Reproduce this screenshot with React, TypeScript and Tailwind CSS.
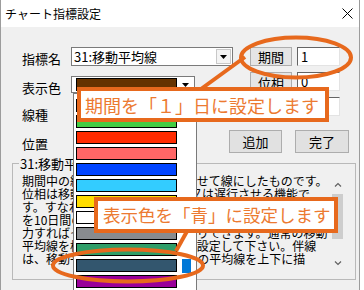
const swatches = [
  "bg-[#663300]",
  "bg-[#44cc44]",
  "bg-[#ff2b00]",
  "bg-[#ff6666]",
  "bg-[#0044ff]",
  "bg-[#33ccff]",
  "bg-[#ffdd00]",
  "bg-white",
  "bg-[#888b8f]",
  "bg-[#2f9e68]",
  "bg-[#33566e]",
  "bg-[#990099]",
];
const selected = 10;

const lines = [
  "期間中の終値平均値を1本に合わせて線にしたものです。",
  "位相は移動平均線を日数分先行又は遅行させる機能で",
  "す。すなわち、期間と位相を組み合わせ、例えば期間",
  "を10日間の移動平均線にして位相に5と入",
  "力すればその線を5日先行させたりできます。通常の移動",
  "平均線を標準で表示する時は0に設定して下さい。伴線",
  "は、移動平均線から一定割合(%)の平均線を上下に描",
];

function DownArrow() {
  return (
    <svg width="7" height="4" viewBox="0 0 7 4">
      <path d="M0 0h7L3.5 4z" fill="#000" />
    </svg>
  );
}

function Chevron({ up }: { up?: boolean }) {
  return (
    <svg width="8" height="5" viewBox="0 0 8 5">
      <path
        d={up ? "M1 4.5L4 1.5L7 4.5" : "M1 0.5L4 3.5L7 0.5"}
        stroke="#606060"
        strokeWidth="1.2"
        fill="none"
      />
    </svg>
  );
}

function LabelButton({ text, h }: { text: string; h: string }) {
  return (
    <div
      className={`flex w-[42px] ${h} items-center justify-center border border-[#adadad] bg-[#e5e5e5] text-[13px] leading-none`}
    >
      {text}
    </div>
  );
}

function NumInput({ value }: { value: string }) {
  return (
    <div className="flex h-[19px] w-[43px] items-center border border-[#e3e3e3] border-t-[#646464] border-l-[#646464] bg-white pl-[3px] text-[13px] leading-none">
      {value}
    </div>
  );
}

export default function App() {
  return (
    <div className="relative h-[290px] w-[364px] overflow-hidden bg-white font-['Noto_Sans_CJK_JP','Noto_Sans',sans-serif] text-black">
      <div className="flex h-full w-[360px] flex-col border-x border-[#9c9c9c]">
        {/* title bar */}
        <div className="flex h-[27px] items-center justify-between bg-white pl-[4px] pr-[6px] text-[12px]">
          <span>チャート指標設定</span>
          <svg width="11" height="11" viewBox="0 0 11 11">
            <path d="M0.5 0.5L10.5 10.5M10.5 0.5L0.5 10.5" stroke="#000" strokeWidth="1" />
          </svg>
        </div>

        <div className="flex-1 bg-[#f0f0f0] pl-[11px]">
          <div className="flex pl-[10px] pt-[20px]">
            {/* left column */}
            <div className="flex w-[211px] flex-col text-[13px]">
              <div className="flex h-[19px] items-center">
                <span className="w-[49px] pt-[3px] leading-none">指標名</span>
                <div className="flex h-[19px] w-[162px] items-center border border-[#7a7a7a] bg-white">
                  <span className="flex-1 pl-[2px] leading-none">31:移動平均線</span>
                  <div className="m-[1px] flex h-[15px] w-[15px] items-center justify-center border border-[#c8c8c8] bg-[#f4f4f4]">
                    <DownArrow />
                  </div>
                </div>
              </div>
              <div className="mt-[10px] flex h-[17px] items-center">
                <span className="w-[49px] pt-[5px] leading-none">表示色</span>
                <div className="flex h-[17px] w-[124px] items-center border border-[#7a7a7a] bg-white">
                  <div className="ml-[4px] h-[13px] w-[101px] border border-black bg-[#663300]" />
                  <div className="flex flex-1 items-center justify-center">
                    <DownArrow />
                  </div>
                </div>
              </div>
              <div className="mt-[8px] flex h-[22px] items-center">
                <span className="w-[49px] pt-[5px] leading-none">線種</span>
              </div>
              <div className="mt-[7px] flex h-[22px] items-center">
                <span className="w-[49px] pt-[5px] leading-none">位置</span>
              </div>
            </div>

            {/* right column */}
            <div className="flex flex-col">
              <div className="flex gap-[5px] pl-[17px]">
                <LabelButton text="期間" h="h-[19px]" />
                <NumInput value="1" />
              </div>
              <div className="mt-[6px] flex gap-[5px] pl-[17px]">
                <LabelButton text="位相" h="h-[20px]" />
                <NumInput value="0" />
              </div>
              <div className="mt-[5px] flex gap-[5px] pl-[17px]">
                <LabelButton text="倍率" h="h-[20px]" />
                <NumInput value="" />
              </div>
              <div className="-ml-[4px] mt-[13px] flex gap-[13px] text-[13px]">
                <button className="h-[23px] w-[53px] border border-[#adadad] bg-[#e1e1e1] leading-none">追加</button>
                <button className="h-[23px] w-[54px] border border-[#adadad] bg-[#e1e1e1] leading-none">完了</button>
              </div>
            </div>
          </div>

          {/* description group */}
          <fieldset className="mt-[4px] h-[123px] w-[344px] border border-[#b9b9b9] pl-[9px] pt-[4px]">
            <legend className="-ml-[3px] px-[1px] text-[13px] leading-[13px]">31:移動平均線</legend>
            <div className="flex">
              <div className="h-[92px] w-[308px] text-[12px] leading-[13px]">
                {lines.map((l) => (
                  <div key={l} className="whitespace-nowrap">
                    {l}
                  </div>
                ))}
              </div>
              <div className="mt-[2px] flex h-[96px] w-[15px] flex-col">
                <div className="flex h-[17px] items-center justify-center">
                  <Chevron up />
                </div>
                <div className="mx-[2px] mt-[1px] h-[45px] bg-[#cdcdcd]" />
                <div className="flex-1" />
                <div className="flex h-[17px] items-center justify-center">
                  <Chevron />
                </div>
              </div>
            </div>
          </fieldset>
        </div>
      </div>

      {/* open colour list */}
      <div className="absolute left-[73px] top-[93px] h-[210px] w-[124px] border border-[#7a7a7a] bg-white pl-[2px] pt-[2px]">
        {swatches.map((c, i) => (
          <div key={c} className="flex h-[16px] items-start pt-[3px]">
            <div className={`h-[13px] w-[101px] border border-black ${c}`} />
            {i === selected && <div className="ml-[5px] h-[14px] w-[9px] bg-[#0078d7]" />}
          </div>
        ))}
      </div>

      {/* annotation marks */}
      <svg className="pointer-events-none absolute left-0 top-0" width="364" height="290" viewBox="0 0 364 290">
        <ellipse cx="296" cy="57.5" rx="55" ry="20" fill="none" stroke="#e7691d" strokeWidth="4" />
        <line x1="190" y1="97" x2="245" y2="57" stroke="#e7691d" strokeWidth="4" />
        <ellipse cx="128" cy="265.5" rx="75" ry="16" fill="none" stroke="#e7691d" strokeWidth="4" />
        <line x1="190" y1="226" x2="176" y2="251" stroke="#e7691d" strokeWidth="4" />
      </svg>

      <div className="absolute left-[77px] top-[87px] flex h-[35px] w-[252px] items-center whitespace-nowrap border-[4px] border-[#e7691d] bg-white pl-[4px] text-[18px] leading-none text-[#ec7a31]">
        期間を「１」日に設定します
      </div>
      <div className="absolute left-[94px] top-[197px] flex h-[36px] w-[244px] items-center whitespace-nowrap border-[4px] border-[#e7691d] bg-white pl-[5px] text-[17.5px] leading-none text-[#ec7a31]">
        表示色を「青」に設定します
      </div>
    </div>
  );
}
